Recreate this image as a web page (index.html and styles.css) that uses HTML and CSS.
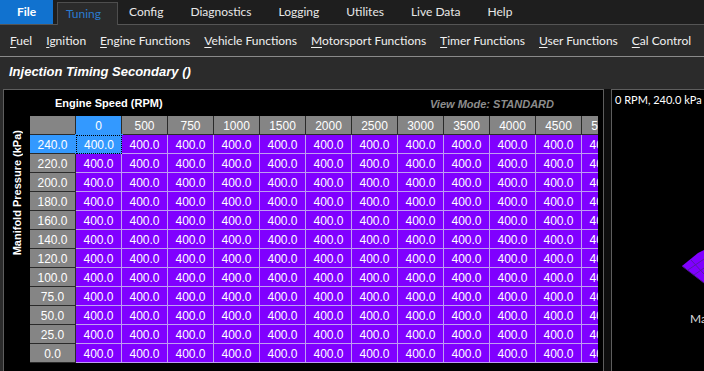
FILE: index.html
```html
<!DOCTYPE html>
<html>
<head>
<meta charset="utf-8">
<link rel="stylesheet" href="styles.css">
</head>
<body>
<div class="app">
  <nav class="tabs">
    <span class="tab tab-file">File</span>
    <span class="tab tab-active">Tuning</span>
    <span class="tab">Config</span>
    <span class="tab">Diagnostics</span>
    <span class="tab">Logging</span>
    <span class="tab">Utilites</span>
    <span class="tab">Live Data</span>
    <span class="tab">Help</span>
  </nav>
  <nav class="ribbon">
    <span class="ribbon-item"><u>F</u>uel</span>
    <span class="ribbon-item"><u>I</u>gnition</span>
    <span class="ribbon-item"><u>E</u>ngine Functions</span>
    <span class="ribbon-item"><u>V</u>ehicle Functions</span>
    <span class="ribbon-item"><u>M</u>otorsport Functions</span>
    <span class="ribbon-item"><u>T</u>imer Functions</span>
    <span class="ribbon-item"><u>U</u>ser Functions</span>
    <span class="ribbon-item"><u>C</u>al Control</span>
  </nav>
  <h1 class="title">Injection Timing Secondary ()</h1>
  <div class="workspace">
    <section class="table-panel">
      <div class="panel-head">
        <span class="axis-x">Engine Speed (RPM)</span>
        <span class="viewmode">View Mode: STANDARD</span>
      </div>
      <div class="table-body">
        <div class="axis-y"><span class="axis-y-text">Manifold Pressure (kPa)</span></div>
        <div class="grid-clip">
          <div class="grid">
            <div class="c hd"></div><div class="c hd sel">0</div><div class="c hd">500</div><div class="c hd">750</div><div class="c hd">1000</div><div class="c hd">1500</div><div class="c hd">2000</div><div class="c hd">2500</div><div class="c hd">3000</div><div class="c hd">3500</div><div class="c hd">4000</div><div class="c hd">4500</div><div class="c hd">5000</div>

            <div class="c rl sel">240.0</div><div class="c v cur">400.0</div><div class="c v">400.0</div><div class="c v">400.0</div><div class="c v">400.0</div><div class="c v">400.0</div><div class="c v">400.0</div><div class="c v">400.0</div><div class="c v">400.0</div><div class="c v">400.0</div><div class="c v">400.0</div><div class="c v">400.0</div><div class="c v">400.0</div>

            <div class="c rl">220.0</div><div class="c v">400.0</div><div class="c v">400.0</div><div class="c v">400.0</div><div class="c v">400.0</div><div class="c v">400.0</div><div class="c v">400.0</div><div class="c v">400.0</div><div class="c v">400.0</div><div class="c v">400.0</div><div class="c v">400.0</div><div class="c v">400.0</div><div class="c v">400.0</div>

            <div class="c rl">200.0</div><div class="c v">400.0</div><div class="c v">400.0</div><div class="c v">400.0</div><div class="c v">400.0</div><div class="c v">400.0</div><div class="c v">400.0</div><div class="c v">400.0</div><div class="c v">400.0</div><div class="c v">400.0</div><div class="c v">400.0</div><div class="c v">400.0</div><div class="c v">400.0</div>

            <div class="c rl">180.0</div><div class="c v">400.0</div><div class="c v">400.0</div><div class="c v">400.0</div><div class="c v">400.0</div><div class="c v">400.0</div><div class="c v">400.0</div><div class="c v">400.0</div><div class="c v">400.0</div><div class="c v">400.0</div><div class="c v">400.0</div><div class="c v">400.0</div><div class="c v">400.0</div>

            <div class="c rl">160.0</div><div class="c v">400.0</div><div class="c v">400.0</div><div class="c v">400.0</div><div class="c v">400.0</div><div class="c v">400.0</div><div class="c v">400.0</div><div class="c v">400.0</div><div class="c v">400.0</div><div class="c v">400.0</div><div class="c v">400.0</div><div class="c v">400.0</div><div class="c v">400.0</div>

            <div class="c rl">140.0</div><div class="c v">400.0</div><div class="c v">400.0</div><div class="c v">400.0</div><div class="c v">400.0</div><div class="c v">400.0</div><div class="c v">400.0</div><div class="c v">400.0</div><div class="c v">400.0</div><div class="c v">400.0</div><div class="c v">400.0</div><div class="c v">400.0</div><div class="c v">400.0</div>

            <div class="c rl">120.0</div><div class="c v">400.0</div><div class="c v">400.0</div><div class="c v">400.0</div><div class="c v">400.0</div><div class="c v">400.0</div><div class="c v">400.0</div><div class="c v">400.0</div><div class="c v">400.0</div><div class="c v">400.0</div><div class="c v">400.0</div><div class="c v">400.0</div><div class="c v">400.0</div>

            <div class="c rl">100.0</div><div class="c v">400.0</div><div class="c v">400.0</div><div class="c v">400.0</div><div class="c v">400.0</div><div class="c v">400.0</div><div class="c v">400.0</div><div class="c v">400.0</div><div class="c v">400.0</div><div class="c v">400.0</div><div class="c v">400.0</div><div class="c v">400.0</div><div class="c v">400.0</div>

            <div class="c rl">75.0</div><div class="c v">400.0</div><div class="c v">400.0</div><div class="c v">400.0</div><div class="c v">400.0</div><div class="c v">400.0</div><div class="c v">400.0</div><div class="c v">400.0</div><div class="c v">400.0</div><div class="c v">400.0</div><div class="c v">400.0</div><div class="c v">400.0</div><div class="c v">400.0</div>

            <div class="c rl">50.0</div><div class="c v">400.0</div><div class="c v">400.0</div><div class="c v">400.0</div><div class="c v">400.0</div><div class="c v">400.0</div><div class="c v">400.0</div><div class="c v">400.0</div><div class="c v">400.0</div><div class="c v">400.0</div><div class="c v">400.0</div><div class="c v">400.0</div><div class="c v">400.0</div>

            <div class="c rl">25.0</div><div class="c v">400.0</div><div class="c v">400.0</div><div class="c v">400.0</div><div class="c v">400.0</div><div class="c v">400.0</div><div class="c v">400.0</div><div class="c v">400.0</div><div class="c v">400.0</div><div class="c v">400.0</div><div class="c v">400.0</div><div class="c v">400.0</div><div class="c v">400.0</div>

            <div class="c rl">0.0</div><div class="c v">400.0</div><div class="c v">400.0</div><div class="c v">400.0</div><div class="c v">400.0</div><div class="c v">400.0</div><div class="c v">400.0</div><div class="c v">400.0</div><div class="c v">400.0</div><div class="c v">400.0</div><div class="c v">400.0</div><div class="c v">400.0</div><div class="c v">400.0</div>
          </div>
        </div>
      </div>
    </section>
    <div class="splitter"></div>
    <section class="chart-panel">
      <div class="chart-readout">0 RPM, 240.0 kPa</div>
      <svg class="surface" width="92" height="282" viewBox="0 0 92 282">
        <polygon points="70,176 86,163 92,160 92,193" fill="#8000ff"/>
        <line x1="76" y1="180" x2="92" y2="169" stroke="#5a1aa8" stroke-width="1"/>
        <line x1="82" y1="185" x2="92" y2="178" stroke="#5a1aa8" stroke-width="1"/>
        <line x1="79" y1="170" x2="92" y2="184" stroke="#5a1aa8" stroke-width="1"/>
        <line x1="70" y1="176" x2="92" y2="193" stroke="#4a148c" stroke-width="1"/>
      </svg>
      <span class="chart-axis">Manifold Pressure (kPa)</span>
    </section>
  </div>
</div>
</body>
</html>
```
FILE: styles.css
```css
* { box-sizing: border-box; }
html, body {
  margin: 0;
  padding: 0;
  width: 704px;
  height: 371px;
  overflow: hidden;
  background: #2b2b2b;
}
.app {
  width: 704px;
  height: 371px;
  display: flex;
  flex-direction: column;
  font-family: Lato, "Liberation Sans", sans-serif;
  color: #ffffff;
}

/* top tabs */
.tabs {
  height: 25px;
  flex: none;
  display: flex;
  align-items: flex-end;
  background: #1e1e1e;
  border-bottom: 1px solid #555555;
  font-size: 12px;
}
.tab {
  height: 24px;
  line-height: 22px;
  padding: 0 13.5px;
  color: #e8e8e8;
  margin-bottom: -1px;
}
.tab-file {
  width: 53px;
  height: 24px;
  align-self: flex-start;
  margin-bottom: 0;
  padding: 0;
  text-align: center;
  line-height: 24px;
  background: #1172cf;
  color: #ffffff;
  font-weight: bold;
}
.tab-active {
  margin-left: 4px;
  width: 61px;
  height: 23px;
  padding: 0 0 0 8px;
  line-height: 21px;
  background: #2b2b2b;
  border: 1px solid #4e4e4e;
  border-bottom: none;
  color: #2a7bd0;
}
.tab-active + .tab { padding-left: 11px; }

/* ribbon */
.ribbon {
  height: 32px;
  flex: none;
  display: flex;
  align-items: center;
  gap: 14px;
  padding-left: 10px;
  background: #2b2b2b;
  border-bottom: 1px solid #8a8a8a;
  font-size: 12px;
  color: #f0f0f0;
}
.ribbon-item { white-space: nowrap; }
.ribbon-item u { text-underline-offset: 2px; }

/* title */
.title {
  margin: 0;
  height: 32px;
  flex: none;
  padding: 7px 0 0 9px;
  font-family: "Liberation Sans", sans-serif;
  font-size: 13px;
  font-weight: bold;
  font-style: italic;
  color: #ffffff;
  line-height: 16px;
}

/* workspace */
.workspace {
  flex: 1;
  display: flex;
  padding-left: 3px;
  min-height: 0;
}
.table-panel {
  width: 601px;
  flex: none;
  background: #000000;
  border: 1px solid #5e5e5e;
  border-bottom: none;
  display: flex;
  flex-direction: column;
}
.panel-head {
  height: 26px;
  flex: none;
  display: flex;
  align-items: center;
  justify-content: space-between;
  padding: 0 49px 0 51px;
  font-family: "Liberation Sans", sans-serif;
  font-size: 11px;
  font-weight: bold;
}
.axis-x { color: #ffffff; }
.viewmode { color: #8c8c8c; font-style: italic; margin-top: 1px; }

.table-body {
  display: flex;
  flex: 1;
  min-height: 0;
}
.axis-y {
  width: 26px;
  flex: none;
  display: flex;
  justify-content: center;
  padding-top: 14px;
}
.axis-y-text {
  writing-mode: vertical-rl;
  transform: rotate(180deg);
  font-family: "Liberation Sans", sans-serif;
  font-size: 11px;
  font-weight: bold;
  color: #ffffff;
  white-space: nowrap;
  height: max-content;
}
.grid-clip {
  width: 568px;
  overflow: hidden;
}
.grid {
  display: grid;
  grid-template-columns: repeat(13, 46px);
  grid-auto-rows: 19px;
  width: 598px;
  font-family: "Liberation Sans", sans-serif;
  font-size: 12px;
}
.c {
  display: flex;
  align-items: center;
  justify-content: center;
  color: #ffffff;
  white-space: nowrap;
  overflow: hidden;
  padding-top: 1px;
}
.hd {
  background: #858585;
  border-right: 1px solid #2a2a2a;
  border-bottom: 1px solid #2a2a2a;
}
.rl {
  background: #858585;
  border-right: 1px solid #2a2a2a;
  border-bottom: 1px solid #2a2a2a;
}
.sel { background: #3399ff; }
.v {
  background: #8000ff;
  border-right: 1px solid #bf9df2;
  border-bottom: 1px solid #bf9df2;
}
.v.cur {
  background: #3399ff;
  border: 1px dotted #000000;
  outline: 1px solid #3399ff;
}

.splitter {
  width: 7px;
  flex: none;
  background: #0e0e0e;
}
.chart-panel {
  flex: 1;
  position: relative;
  overflow: hidden;
  background: #000000;
  border: 1px solid #5e5e5e;
  border-right: none;
  border-bottom: none;
}
.chart-readout {
  padding: 3px 0 0 3px;
  font-size: 11px;
  color: #ffffff;
  white-space: nowrap;
}
.surface {
  position: absolute;
  left: 0;
  top: 0;
}
.chart-axis {
  position: absolute;
  left: 78px;
  top: 221px;
  font-size: 12px;
  color: #d8d8d8;
  white-space: nowrap;
}
```
